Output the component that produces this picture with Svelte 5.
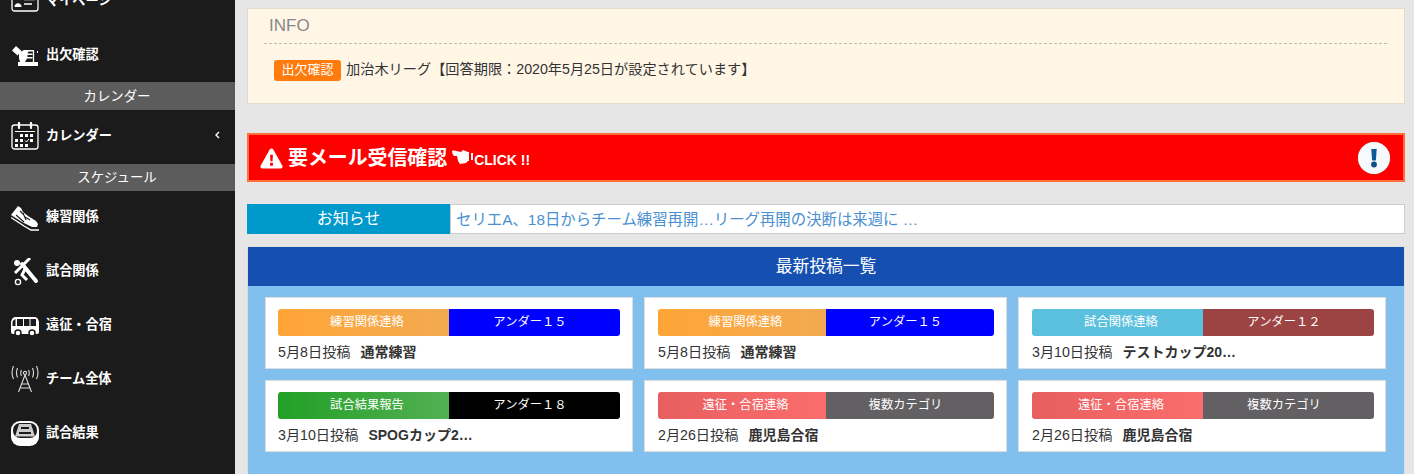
<script>
  const nav = [
    { type: "item", label: "マイページ", icon: "card" },
    { type: "item", label: "出欠確認", icon: "vote" },
    { type: "head", label: "カレンダー" },
    { type: "item", label: "カレンダー", icon: "calendar", arrow: true },
    { type: "head", label: "スケジュール", short: true },
    { type: "item", label: "練習関係", icon: "shoe" },
    { type: "item", label: "試合関係", icon: "player" },
    { type: "item", label: "遠征・合宿", icon: "bus" },
    { type: "item", label: "チーム全体", icon: "antenna" },
    { type: "item", label: "試合結果", icon: "stadium" }
  ];

  const posts = [
    { cat: "練習関係連絡", catClass: "orange", team: "アンダー１５", teamClass: "blue", date: "5月8日投稿", title: "通常練習" },
    { cat: "練習関係連絡", catClass: "orange", team: "アンダー１５", teamClass: "blue", date: "5月8日投稿", title: "通常練習" },
    { cat: "試合関係連絡", catClass: "sky", team: "アンダー１２", teamClass: "brown", date: "3月10日投稿", title: "テストカップ20…" },
    { cat: "試合結果報告", catClass: "green", team: "アンダー１８", teamClass: "black", date: "3月10日投稿", title: "SPOGカップ2…" },
    { cat: "遠征・合宿連絡", catClass: "red", team: "複数カテゴリ", teamClass: "gray", date: "2月26日投稿", title: "鹿児島合宿" },
    { cat: "遠征・合宿連絡", catClass: "red", team: "複数カテゴリ", teamClass: "gray", date: "2月26日投稿", title: "鹿児島合宿" }
  ];
</script>

<div class="page">
  <aside class="side">
    {#each nav as n}
      {#if n.type === "head"}
        <div class="head" class:short={n.short}>{n.label}</div>
      {:else}
        <div class="item">
          <svg class="ico" viewBox="0 0 28 28" aria-hidden="true">
            {#if n.icon === "card"}
              <rect x="1" y="-3" width="26" height="26" rx="2.5" fill="none" stroke="#fff" stroke-width="1.3" />
              <circle cx="7" cy="9" r="2.600" fill="#fff" />
              <path d="M3.500 19c0-5 7-5 7 0z" fill="#fff" />
              <path d="M13 7h11M13 11.500h11M13 16h8" stroke="#fff" stroke-width="1.400" />
            {:else if n.icon === "vote"}
              <path d="M1 8.500 5 4l5.500 5-4 4.500z" fill="#fff" />
              <path d="M8 10.500 13 8h10v1.500h-5.500l-1 2h5v1.500h-5v2h5v1.500h-5.500L14 20H9l-1-4z" fill="#fff" />
              <path d="M22.500 8.500V20" stroke="#fff" stroke-width="1.300" />
              <path d="M7 20h20v4H7z" fill="#fff" />
              <path d="M26.500 9v2" stroke="#fff" />
            {:else if n.icon === "calendar"}
              <rect x="1" y="3" width="26" height="24" rx="2.500" fill="#1b1b1b" stroke="#fff" stroke-width="1.300" />
              <path d="M8 1v5M20 1v5" stroke="#fff" stroke-width="2.200" stroke-linecap="round" />
              <path d="M4 9.500h20" stroke="#fff" stroke-width="1" />
              <path d="M9 12h3v3H9zM14 12h3v3h-3zM19 12h3v3h-3zM4 17h3v3H4zM9 17h3v3H9zM19 17h3v3h-3zM4 22h3v3H4zM9 22h3v3H9zM14 22h3v3h-3z" fill="#fff" />
              <path d="m14 18.500 1.500 1.500 2.500-3" stroke="#fff" fill="none" />
            {:else if n.icon === "shoe"}
              <path d="M0 11 7 2l3 2 2 4 5 4 8 5 2 3-1 3-5 0L11 18z" fill="#fff" />
              <path d="M0 13.500 13 22l7 4h8" stroke="#fff" stroke-width="1.400" fill="none" />
              <path d="m9 7 4 4M5 11l8 7M14 13l5 3M12 9l3 7" stroke="#1b1b1b" stroke-width="1.100" />
            {:else if n.icon === "player"}
              <circle cx="6" cy="5" r="3" fill="#fff" />
              <path d="M19 0 4 15" stroke="#fff" stroke-width="3" />
              <path d="M11 6l14 17" stroke="#fff" stroke-width="4" stroke-linecap="round" />
              <path d="M14 11l-3 6 5 5" fill="none" stroke="#fff" stroke-width="3" />
              <circle cx="7" cy="24" r="2.600" fill="none" stroke="#fff" stroke-width="1.400" />
            {:else if n.icon === "bus"}
              <path d="M4 5h20q3 .5 4 5v10q0 2-2 2H2q-2 0-2-2V10q1-4.500 4-5z" fill="#fff" />
              <path d="M6 7h6v7H6zM13 7h5.500v7H13zM19.500 7H25v7h-5.500zM1.500 10Q2 8 4.500 7v7h-3z" fill="#1b1b1b" />
              <circle cx="7" cy="21" r="3" fill="#fff" stroke="#1b1b1b" stroke-width="1.500" />
              <circle cx="21" cy="21" r="3" fill="#fff" stroke="#1b1b1b" stroke-width="1.500" />
            {:else if n.icon === "antenna"}
              <g fill="none" stroke="#ddd" stroke-width="1.100">
                <circle cx="14" cy="7" r="1.600" />
                <path d="M14 9 7.500 26M14 9l6.500 17M11 18h6M9.500 22h9" />
                <path d="M10.500 4q-1.500 3 0 6M17.500 4q1.500 3 0 6M6.500 2q-2 5 0 9.500M21.500 2q2 5 0 9.500M2.500 0q-3 7 0 13M25.500 0q3 7 0 13" />
              </g>
            {:else if n.icon === "stadium"}
              <rect x="0" y="1" width="28" height="25" rx="9" fill="#fff" />
              <rect x="2" y="3" width="24" height="15" rx="7" fill="#1b1b1b" />
              <path d="M8 4h12l4 12.500H4z" fill="#ccc" />
              <path d="M10 7h8v2h-8zM8 12h12v2H8z" fill="#1b1b1b" />
            {/if}
          </svg>
          <span class="label">{n.label}</span>
          {#if n.arrow}
            <svg class="chev" viewBox="0 0 6 8" aria-hidden="true"><path d="M5 1 2 4l3 3" fill="none" stroke="#fff" stroke-width="1.400" /></svg>
          {/if}
        </div>
      {/if}
    {/each}
  </aside>

  <main class="main">
    <section class="info">
      <h2>INFO</h2>
      <p><span class="badge">出欠確認</span>加治木リーグ【回答期限：2020年5月25日が設定されています】</p>
    </section>

    <section class="alert">
      <svg class="warn" viewBox="0 0 24 22" aria-hidden="true">
        <path d="M12 .5q1.200 0 1.900 1.200l9.500 17q.8 2-1.400 2.800H2q-2.200-.8-1.400-2.800l9.500-17Q10.800.5 12 .5z" fill="#fff" />
        <path d="M10.500 7h3l-.4 7h-2.200zM10.500 15.500h3v3h-3z" fill="#f00" />
      </svg>
      <strong class="title">要メール受信確認</strong>
      <svg class="hand" viewBox="0 0 22 16" aria-hidden="true">
        <path d="M0 2.500Q0 1 2 1.500L9 3l2-2 5 2h2v9h-2l-2 2-6 1-2-3-1-5H2Q0 5 0 2.500z" fill="#fff" />
        <path d="M17 3h1v9h-1z" fill="#f00" />
        <path d="M19 4h2v7h-2z" fill="#fff" />
      </svg>
      <span class="click">CLICK !!</span>
      <span class="mark">
        <svg viewBox="0 0 32 32" aria-hidden="true">
          <path d="M13.300 7h5.400l-.8 11.500h-3.800z" fill="#0a5a94" />
          <circle cx="16" cy="22.500" r="2.900" fill="#0a4f86" />
        </svg>
      </span>
    </section>

    <section class="notice">
      <div class="notice-label">お知らせ</div>
      <div class="notice-text">セリエA、18日からチーム練習再開…リーグ再開の決断は来週に …</div>
    </section>

    <section class="panel">
      <h2 class="panel-head">最新投稿一覧</h2>
      <div class="grid">
        {#each posts as p}
          <article class="card">
            <div class="tags">
              <span class="tag cat {p.catClass}">{p.cat}</span>
              <span class="tag team {p.teamClass}">{p.team}</span>
            </div>
            <div class="line"><span class="date">{p.date}</span><b>{p.title}</b></div>
          </article>
        {/each}
      </div>
    </section>
  </main>
</div>

<style>
  :global(body) {
    margin: 0;
    background: #e6e6e6;
  }

  .page {
    display: grid;
    grid-template-columns: 235px 1fr;
    height: 474px;
    overflow: hidden;
    font-family: "Liberation Sans", "Noto Sans CJK JP", sans-serif;
    color: #333;
  }

  .side {
    background: #1b1b1b;
    color: #fff;
    margin-top: -25px;
    height: 499px;
  }

  .item {
    display: flex;
    align-items: center;
    height: 54px;
    padding-left: 11px;
    position: relative;
  }

  .item:nth-child(2) {
    margin-bottom: -1px;
  }

  .ico {
    width: 28px;
    height: 28px;
    flex: none;
  }

  .item:nth-child(4) .ico {
    margin-top: -2px;
  }

  .label {
    margin: 0 0 6px 7px;
    font-size: 13.200px;
    font-weight: 700;
  }

  .chev {
    position: absolute;
    left: 214px;
    top: 21px;
    width: 6px;
    height: 8px;
  }

  .head {
    position: relative;
    height: 28px;
    line-height: 29px;
    background: #5c5c5c;
    text-align: center;
    font-size: 13.400px;
    color: #fff;
    padding-right: 1px;
  }

  .head.short {
    height: 27px;
    line-height: 28px;
  }

  .main {
    padding: 8px 9px 0 12px;
    min-width: 0;
  }

  .info {
    height: 96px;
    box-sizing: border-box;
    background: #fff6e6;
    border: 1px solid #e0dcd2;
    padding: 0 17px 0 16px;
  }

  .info h2 {
    margin: 0;
    height: 34px;
    line-height: 34px;
    padding-left: 5px;
    font-size: 17px;
    font-weight: 400;
    color: #888;
    border-bottom: 1px dashed #bbb;
  }

  .info p {
    margin: 16px 0 0 10px;
    font-size: 14.200px;
    line-height: 19px;
    display: flex;
    align-items: flex-start;
    white-space: nowrap;
  }

  .badge {
    background: #ff7b0e;
    color: #fff;
    border-radius: 3px;
    height: 21px;
    line-height: 20px;
    width: 67px;
    text-align: center;
    margin-right: 5px;
    font-size: 13px;
    flex: none;
  }

  .alert {
    margin-top: 29px;
    height: 49px;
    box-sizing: border-box;
    background: #f00;
    border: 2px solid #ff6f3a;
    display: flex;
    align-items: center;
    padding: 0 11px;
    color: #fff;
  }

  .warn {
    width: 23px;
    height: 21px;
    flex: none;
    margin-top: 2px;
  }

  .title {
    margin: 0 0 2px 5px;
    font-size: 19.900px;
  }

  .hand {
    width: 22px;
    height: 16px;
    margin-left: 5px;
    margin-top: -1px;
    flex: none;
  }

  .click {
    font-size: 14px;
    font-weight: 700;
    margin: 4px 0 0 0;
  }

  .mark {
    margin-left: auto;
    width: 32px;
    height: 32px;
    border-radius: 50%;
    background: #f7fafc;
    box-shadow: 0 0 1px #888;
    margin-right: 2px;
  }

  .mark svg {
    display: block;
    width: 32px;
    height: 32px;
  }

  .notice {
    margin-top: 22px;
    height: 30px;
    display: flex;
  }

  .notice-label {
    width: 203px;
    flex: none;
    background: #0099cc;
    color: #fff;
    text-align: center;
    line-height: 30px;
    font-size: 16px;
  }

  .notice-text {
    flex: 1;
    background: #fff;
    border: 1px solid #ccc;
    padding-left: 5px;
    line-height: 30px;
    font-size: 15.400px;
    color: #4a8fd0;
    white-space: nowrap;
  }

  .panel {
    margin-top: 12px;
    border: 1px solid #ddd;
    border-bottom: 0;
    background: #81bfef;
    height: 228px;
    box-sizing: border-box;
  }

  .panel-head {
    margin: 0;
    height: 39px;
    line-height: 40px;
    background: #1550b0;
    color: #fff;
    text-align: center;
    font-size: 16.800px;
    font-weight: 400;
  }

  .grid {
    display: grid;
    grid-template-columns: 368px 363px 368px;
    grid-auto-rows: 72px;
    gap: 11px;
    padding: 11px 0 0 17px;
  }

  .card {
    background: #fff;
    border: 1px solid #ddd;
    padding: 11px 12px 0;
    box-sizing: border-box;
  }

  .card:nth-child(3n + 2) {
    padding-left: 13px;
  }

  .card:nth-child(3n) {
    padding-left: 13px;
    padding-right: 11px;
  }

  .tags {
    display: grid;
    grid-template-columns: 1fr 1fr;
    height: 27px;
    border-radius: 3px;
    overflow: hidden;
  }

  .tag {
    color: #fff;
    text-align: center;
    line-height: 27px;
    font-size: 12.300px;
  }

  .cat {
    padding-left: 7px;
  }

  .team {
    padding-right: 9px;
  }

  .orange { background: linear-gradient(90deg, #ffa537, #f2aa50); }
  .sky { background: #5bc0de; }
  .green { background: linear-gradient(90deg, #22a026, #52b052); }
  .red { background: linear-gradient(90deg, #e85f60, #fb6d6d); }
  .blue { background: #00f; }
  .brown { background: #9c4444; }
  .black { background: #000; }
  .gray { background: #626062; }

  .line {
    margin-top: 6px;
    font-size: 14px;
    line-height: 20px;
    white-space: nowrap;
  }

  .date {
    font-size: 14.200px;
    margin-right: 10px;
  }
</style>
